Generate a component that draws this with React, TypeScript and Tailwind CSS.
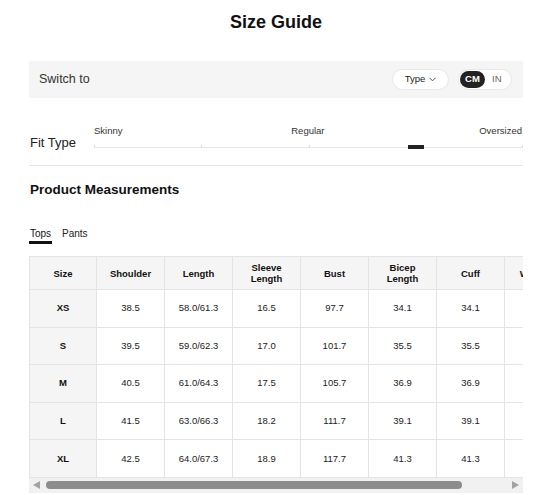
import React from "react";

const headers = ["Size", "Shoulder", "Length", "Sleeve Length", "Bust", "Bicep Length", "Cuff", "Waist Size"];

const rows = [
  ["XS", "38.5", "58.0/61.3", "16.5", "97.7", "34.1", "34.1", ""],
  ["S", "39.5", "59.0/62.3", "17.0", "101.7", "35.5", "35.5", ""],
  ["M", "40.5", "61.0/64.3", "17.5", "105.7", "36.9", "36.9", ""],
  ["L", "41.5", "63.0/66.3", "18.2", "111.7", "39.1", "39.1", ""],
  ["XL", "42.5", "64.0/67.3", "18.9", "117.7", "41.3", "41.3", ""],
];

const colWidths = ["w-[67px]", "w-[68px]", "w-[68px]", "w-[68px]", "w-[68px]", "w-[68px]", "w-[68px]", "w-[77px]"];

function FitSlider() {
  return (
    <div className="flex-1">
      <div className="flex justify-between text-[9.5px] leading-[12px] text-[#333]">
        <span>Skinny</span>
        <span className="pl-[14px]">Regular</span>
        <span className="pr-[1px]">Oversized</span>
      </div>
      <div className="relative mt-[8px] h-[4px]">
        <div className="absolute left-0 right-0 top-[2px] h-[1px] bg-[#e6e6e6]" />
        {/* ticks */}
        <div className="absolute left-0 top-[0px] h-[3px] w-[1px] bg-[#dcdcdc]" />
        <div className="absolute left-[25%] top-[0px] h-[3px] w-[1px] bg-[#dcdcdc]" />
        <div className="absolute left-[50%] top-[0px] h-[3px] w-[1px] bg-[#dcdcdc]" />
        <div className="absolute right-0 top-[0px] h-[3px] w-[1px] bg-[#dcdcdc]" />
        <div className="absolute left-[75%] top-0 h-[4px] w-[16px] -translate-x-1/2 bg-[#222]" />
      </div>
    </div>
  );
}

function Scrollbar() {
  return (
    <div className="flex h-[15px] items-center bg-[#f1f1f1]">
      <div className="flex w-[15px] justify-center">
        <svg width="7" height="8" viewBox="0 0 7 8">
          <polygon points="7,0 7,8 0,4" fill="#a3a3a3" />
        </svg>
      </div>
      <div className="flex flex-1 pl-[2px]">
        <div className="h-[8px] w-[416px] rounded-full bg-[#8c8c8c]" />
      </div>
      <div className="flex w-[15px] justify-center">
        <svg width="7" height="8" viewBox="0 0 7 8">
          <polygon points="0,0 0,8 7,4" fill="#a3a3a3" />
        </svg>
      </div>
    </div>
  );
}

export default function App() {
  return (
    <div className="w-[536px] min-h-[495px] bg-white pl-[29px] pr-[13px] font-['Liberation_Sans',Arial,sans-serif] text-[#222]">
      {/* Title */}
      <h1 className="pt-[11px] text-center text-[18px] font-bold leading-[22px] text-[#111]">Size Guide</h1>

      {/* Switch bar */}
      <div className="mt-[28px] flex h-[37px] items-center justify-between bg-[#f5f5f5] pl-[10px] pr-[11px]">
        <span className="text-[12.5px] text-[#333]">Switch to</span>
        <div className="flex items-center gap-[9px]">
          <button className="flex h-[21px] w-[57px] items-center justify-center gap-[4px] rounded-full border border-[#e8e8e8] bg-white text-[9.5px] text-[#222]">
            Type
            <svg width="7" height="5" viewBox="0 0 7 5">
              <polyline points="0.5,0.8 3.5,3.8 6.5,0.8" fill="none" stroke="#444" strokeWidth="0.9" />
            </svg>
          </button>
          <div className="flex h-[21px] w-[54px] items-center rounded-full border border-[#e8e8e8] bg-white pl-[1px] text-[9.5px]">
            <span className="flex h-[17px] w-[25px] items-center justify-center rounded-full bg-[#222] font-bold text-white">CM</span>
            <span className="ml-[7px] text-[#666]">IN</span>
          </div>
        </div>
      </div>

      {/* Fit type */}
      <div className="mt-[27px] flex items-end">
        <span className="w-[65px] translate-y-[2px] pl-[1px] text-[13px] leading-[17px] text-[#222]">Fit Type</span>
        <FitSlider />
      </div>
      <div className="mt-[16px] border-t border-[#e5e5e5]" />

      {/* Product measurements */}
      <h2 className="mt-[15px] pl-[1px] text-[13.5px] font-bold leading-[18px] text-[#111]">Product Measurements</h2>

      <div className="mt-[28px] flex gap-[10px] text-[10px] leading-[13px]">
        <div className="flex flex-col">
          <span className="pl-[1px] text-[#111]">Tops</span>
          <span className="mt-[1px] h-[3px] w-[23px] bg-[#111]" />
        </div>
        <span className="text-[#222]">Pants</span>
      </div>

      {/* Table */}
      <div className="mt-[12px] overflow-hidden">
        <table className="w-[552px] table-fixed border-collapse text-[9.5px] text-[#222]">
          <colgroup>
            {colWidths.map((w, i) => (
              <col key={i} className={w} />
            ))}
          </colgroup>
          <thead>
            <tr className="h-[33px] bg-[#f5f5f5]">
              {headers.map((h) => (
                <th key={h} className="border border-[#e4e4e4] px-[12px] text-center font-bold leading-[11px] text-[#111]">
                  {h}
                </th>
              ))}
            </tr>
          </thead>
          <tbody>
            {rows.map((r) => (
              <tr key={r[0]} className="h-[37.6px]">
                {r.map((v, i) => (
                  <td
                    key={i}
                    className={
                      i === 0
                        ? "border border-[#e4e4e4] bg-[#f5f5f5] text-center font-bold text-[#111]"
                        : "border border-[#e4e4e4] text-center"
                    }
                  >
                    {v}
                  </td>
                ))}
              </tr>
            ))}
          </tbody>
        </table>
      </div>
      <Scrollbar />
    </div>
  );
}
